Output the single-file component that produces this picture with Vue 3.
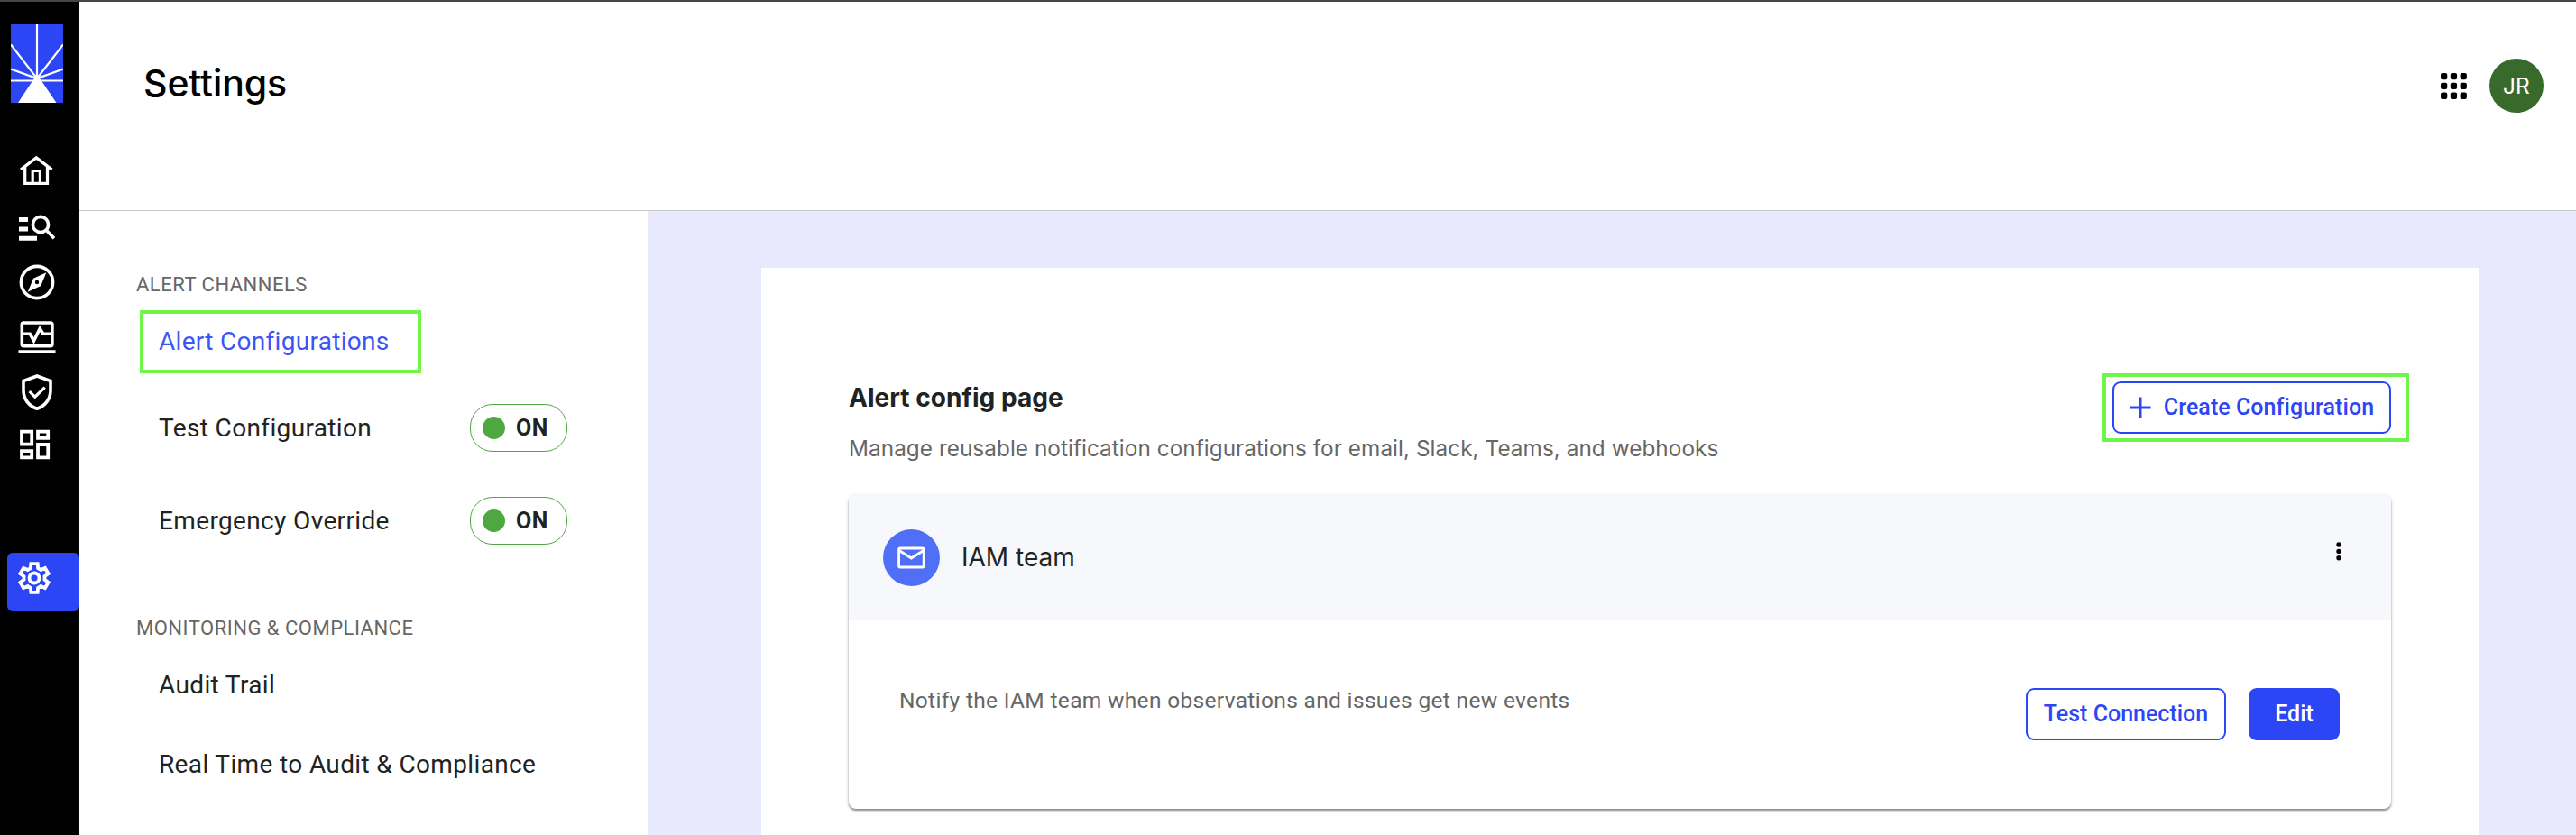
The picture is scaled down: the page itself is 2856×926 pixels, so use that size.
<script setup>
const gear = (() => {
  const points = []
  for (let tooth = 0; tooth < 6; tooth++) {
    for (const [angle, radius] of [[-21, 11.6], [-13, 16.3], [13, 16.3], [21, 11.6]]) {
      const a = ((tooth * 60 - 90 + angle) * Math.PI) / 180
      points.push(`${(18 + radius * Math.cos(a)).toFixed(2)},${(18 + radius * Math.sin(a)).toFixed(2)}`)
    }
  }
  return points.join(' ')
})()

const toggles = ['Test Configuration', 'Emergency Override']
</script>

<template>
  <div class="app">
    <nav class="rail">
      <svg class="logo" width="58" height="87" viewBox="0 0 58 87">
        <rect width="58" height="87" fill="#2c46f6" />
        <path d="M29 0V60M0 22.5L29 60L58 22.5M0 49.5L29 60L58 49.5M0 62.5H58" fill="none" stroke="#fff" stroke-width="2.2" />
        <path d="M29 55L33.5 62L50.5 87H8L24.5 62Z" fill="#fff" />
      </svg>
      <svg class="home" width="42" height="36" viewBox="20 171 42 36" fill="none" stroke="#fff" stroke-width="3.2">
        <path d="M23 188L40.3 175L57.5 188" stroke-width="3.4" />
        <path d="M27.7 185V203.3H52.5V185" />
        <path d="M36.2 203V189.5H44.4V203" />
      </svg>
      <svg class="find" width="42" height="32" viewBox="20 237 42 32" fill="none" stroke="#fff">
        <path d="M21 243.5H31M21 254H31M21 264.3H41" stroke-width="5" />
        <circle cx="45" cy="249" r="8.6" stroke-width="3.6" />
        <path d="M51 255L60 264.2" stroke-width="3.6" />
      </svg>
      <svg class="compass" width="42" height="42" viewBox="20 291.5 42 42">
        <circle cx="41" cy="312.5" r="17.6" fill="none" stroke="#fff" stroke-width="3.6" />
        <path fill-rule="evenodd" d="M51.3 301.8L45.3 316.6L30.7 323.3L37 308.3ZM41 310.3A2.2 2.2 0 1 0 41 314.7A2.2 2.2 0 1 0 41 310.3Z" fill="#fff" />
      </svg>
      <svg class="monitor" width="42" height="38" viewBox="20 355 42 38" fill="none" stroke="#fff" stroke-width="3.6">
        <rect x="24.3" y="358" width="33.6" height="25.6" rx="1.8" />
        <path d="M25 370.3H33.2L37.5 378L44.2 364.5L47.8 370.3H57" />
        <path d="M20.5 390H61.5" />
      </svg>
      <svg class="shield" width="42" height="42" viewBox="20 414 42 42" fill="none" stroke="#fff" stroke-width="3.6">
        <path d="M41 417L56 422.5V433C56 443 49.5 450.5 41 453.2C32.5 450.5 26 443 26 433V422.5Z" />
        <path d="M32.6 434L38.7 440.2L49.7 429.6" stroke-width="3.2" />
      </svg>
      <svg class="tiles" width="42" height="34" viewBox="20 475.5 42 34" fill="none" stroke="#fff" stroke-width="3.8">
        <path d="M24 478.1H35.2V492.2H24ZM42 478.1H53.2V485.3H42ZM24 499.7H35.2V506.8H24ZM42 492.5H53.2V506.8H42Z" />
      </svg>
      <a class="active">
        <svg width="36" height="36" viewBox="0 0 36 36" fill="none" stroke="#fff" stroke-width="3.8">
          <polygon :points="gear" />
          <circle cx="18" cy="18" r="5.5" />
        </svg>
      </a>
    </nav>

    <div class="page">
      <header class="top">
        <h1>Settings</h1>
        <div class="account">
          <svg width="29" height="29" viewBox="0 0 29 29">
            <template v-for="y in 3" :key="y">
              <rect v-for="x in 3" :key="x" :x="(x - 1) * 10.8" :y="(y - 1) * 10.8" width="7.3" height="7.3" rx="2" />
            </template>
          </svg>
          <span class="avatar">JR</span>
        </div>
      </header>

      <div class="body">
        <aside class="side">
          <div class="label">ALERT CHANNELS</div>
          <a class="item">Alert Configurations</a>
          <div v-for="name in toggles" :key="name" class="toggle-row">
            <span class="item-text">{{ name }}</span>
            <span class="pill"><i></i><b>ON</b></span>
          </div>
          <div class="label second">MONITORING &amp; COMPLIANCE</div>
          <a class="item-text link">Audit Trail</a>
          <a class="item-text link last">Real Time to Audit &amp; Compliance</a>
        </aside>

        <main class="main">
          <section class="sheet">
            <div class="intro">
              <div>
                <h2>Alert config page</h2>
                <p class="lead">Manage reusable notification configurations for email, Slack, Teams, and webhooks</p>
              </div>
              <div class="frame">
                <button class="btn create">
                  <svg width="24" height="24" viewBox="0 0 24 24"><path d="M12 .5V23.5M.5 12H23.5" stroke="currentColor" stroke-width="3" /></svg>
                  <span>Create Configuration</span>
                </button>
              </div>
            </div>
            <article class="card">
              <div class="card-head">
                <span class="badge">
                  <svg width="31" height="25" viewBox="0 0 31 25" fill="none" stroke="#fff" stroke-width="2.8">
                    <rect x="1.6" y="2" width="27.6" height="21" rx="1.5" />
                    <path d="M2 4.5L15.4 13L29 4.5" />
                  </svg>
                </span>
                <span class="name">IAM team</span>
                <svg class="dots" width="6" height="21" viewBox="0 0 6 21"><circle cx="3" cy="3" r="2.7" /><circle cx="3" cy="10.4" r="2.7" /><circle cx="3" cy="17.8" r="2.7" /></svg>
              </div>
              <div class="card-body">
                <p>Notify the IAM team when observations and issues get new events</p>
                <div class="actions">
                  <button class="btn test">Test Connection</button>
                  <button class="btn edit">Edit</button>
                </div>
              </div>
            </article>
          </section>
        </main>
      </div>
    </div>
  </div>
</template>

<style>
body { background: #fff; overflow: hidden; }
</style>

<style scoped>
* { box-sizing: border-box; }
.app { display: flex; width: 2856px; height: 926px; border-top: 2px solid #464646; font-family: Roboto, sans-serif; color: #212322; background: #fff; overflow: hidden; }
.rail { width: 88px; background: #000; display: flex; flex-direction: column; align-items: center; padding-top: 25px; }
.rail svg { display: block; flex: none; margin-right: 6px; }
.logo { margin-bottom: 57px; }
.home { margin-bottom: 30px; }
.find { margin-bottom: 22.5px; }
.compass { margin-bottom: 21.5px; }
.monitor { margin-bottom: 21px; }
.shield { margin-bottom: 19.5px; }
.tiles { margin-bottom: 103.5px; }
.active { width: 80px; height: 65px; margin-left: 8px; flex: none; background: #2c46f6; border-radius: 6px; padding: 9.5px 0 0 11.5px; }
.page { flex: 1; display: flex; flex-direction: column; min-width: 0; }
.top { height: 232px; flex: none; border-bottom: 1px solid #c8c8cb; display: flex; justify-content: space-between; padding: 63px 36px 0 71px; }
h1 { margin: 0; height: 56px; font: 500 41px/54px Inter, sans-serif; letter-spacing: -.1px; color: #000; }
.account { display: flex; align-items: center; height: 60px; gap: 25px; }
.avatar { width: 60px; height: 60px; border-radius: 50%; background: #386a2c; color: #fff; display: flex; align-items: center; justify-content: center; font: 400 24.5px/30px Inter, sans-serif; }
.body { flex: 1; display: flex; }
.side { width: 630px; padding: 66px 89px 0 63px; }
.label { height: 32px; font-size: 22px; line-height: 32px; letter-spacing: .5px; color: #666; white-space: nowrap; }
.item { display: flex; align-items: center; width: 312px; height: 70px; margin: 12px 0 34px 4px; padding: 0 0 1px 17px; border: 4px solid #70f64a; font-size: 28px; letter-spacing: .3px; color: #3c55f6; }
.toggle-row { display: flex; justify-content: space-between; align-items: center; height: 53px; margin-bottom: 50px; padding-left: 25px; }
.item-text { font-size: 28px; line-height: 40px; letter-spacing: .36px; white-space: nowrap; }
.pill { width: 108px; height: 53px; border: 1px solid #4fa742; border-radius: 25px; display: flex; align-items: center; gap: 12px; padding-left: 13px; }
.pill i { width: 25px; height: 25px; border-radius: 50%; background: #4fa742; }
.pill b { font-size: 25px; line-height: 30px; font-weight: 700; letter-spacing: .5px; }
.second { margin-top: 77px; }
.link { display: block; padding-left: 25px; margin-top: 27px; }
.last { margin-top: 48px; }
.main { flex: 1; background: #e8e9fc; padding: 63px 108px 0 126px; display: flex; }
.sheet { flex: 1; background: #fff; padding-left: 97px; }
.intro { display: flex; justify-content: space-between; height: 252px; padding: 117px 77px 0 0; }
h2 { margin: 9px 0 0; font: 700 28px/36px Inter, sans-serif; letter-spacing: .05px; }
.lead { margin: 20px 0 0; font: 400 24.3px/36px Inter, sans-serif; letter-spacing: .06px; color: #666; white-space: nowrap; }
.frame { width: 340px; height: 76px; border: 4px solid #70f64a; padding: 5px 0 0 7px; }
.btn { display: flex; align-items: center; justify-content: center; height: 58px; padding: 0; border: 2px solid #2c46f6; border-radius: 9px; background: #fff; color: #2c46f6; font: 500 25px/32px Roboto, sans-serif; white-space: nowrap; }
.create { width: 309px; gap: 14px; letter-spacing: .06px; }
.card { width: 1710px; height: 348px; border-radius: 8px; background: #fff; box-shadow: 0 2px 2px rgba(0,0,0,.4), 0 1px 5px rgba(0,0,0,.14); }
.card-head { display: flex; align-items: center; height: 139px; background: #f7f8fc; padding: 0 55px 0 38px; border-radius: 4px 4px 0 0; }
.badge { width: 63px; height: 63px; border-radius: 50%; background: #506ff7; display: flex; align-items: center; justify-content: center; }
.name { margin-left: 24px; margin-bottom: 2px; font: 400 28px/40px Inter, sans-serif; }
.dots { margin-left: auto; margin-bottom: 14px; }
.card-body { display: flex; justify-content: space-between; padding: 75px 57px 0 56px; }
.card-body p { margin: -4px 0 0; font-size: 24.5px; line-height: 36px; letter-spacing: .33px; color: #666; }
.actions { display: flex; gap: 25px; }
.test { width: 222px; }
.edit { width: 101px; background: #2c46f6; color: #fff; }
</style>
